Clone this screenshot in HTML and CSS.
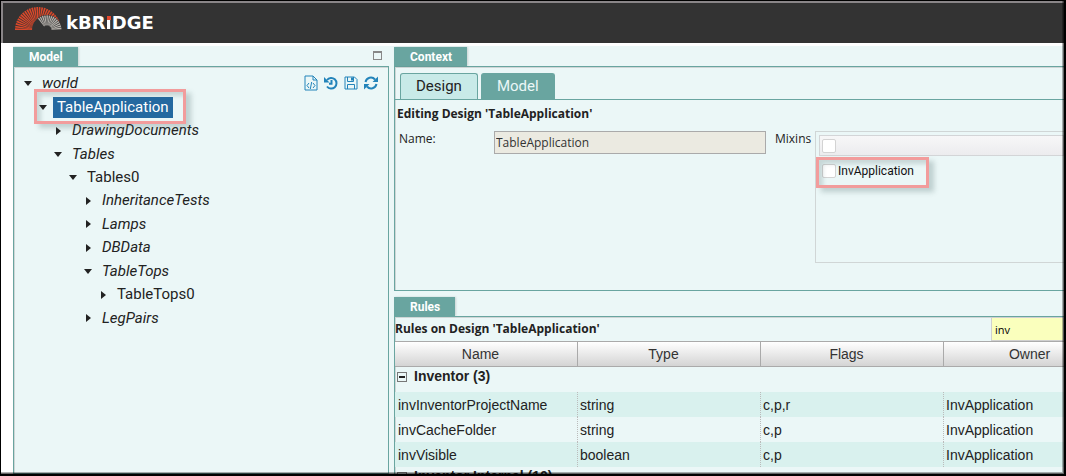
FILE: index.html
```html
<!DOCTYPE html>
<html lang="en">
<head>
<meta charset="utf-8">
<title>kBridge</title>
<link rel="stylesheet" href="styles.css">
</head>
<body>
<div class="frame">
  <header class="topbar">
    <svg class="logo-mark" viewBox="0 0 48 26" aria-hidden="true">
      <path d="M9 25A14 14 0 0 1 37 25" fill="none" stroke="#d9482b" stroke-width="18" stroke-dasharray="1.100 0.500"/>
      <circle cx="32" cy="25" r="15" fill="#333"/>
      <path d="M26 17.500A9.500 9.500 0 0 1 41.500 25" fill="none" stroke="#b5b1ac" stroke-width="10" stroke-dasharray="1 0.500"/>
    </svg>
    <span class="brand">kBR<span class="brand-accent">ı</span>DGE</span>
  </header>
  <main class="workspace">
    <section class="left">
      <div class="tab-row">
        <h2 class="pane-tab">Model</h2>
        <button class="maximize" aria-label="Maximize"></button>
      </div>
      <div class="pane tree-pane">
        <div class="toolbar">
          <button aria-label="Source"><svg viewBox="0 0 14 16"><path d="M1 1h8l4 4v10H1zM9 1v4h4M5 8l-2 2.500 2 2.500M9 8l2 2.500L9 13M7.700 7l-1.400 7" class="thin"/></svg></button>
          <button aria-label="History"><svg viewBox="0 0 14 16"><path d="M3 5a5.300 5.300 0 1 1 0 6.500M7.500 5v3.800H5" class="thick"/><path d="M0 2v5.500h5.500z" class="solid"/></svg></button>
          <button aria-label="Save"><svg viewBox="0 0 14 16"><path d="M1 2h9.500L13 4.500V14H1zM3.500 14V9.500h7V14M3.500 2v4.500h6V2" class="thin"/><path d="M7 2.500h2v3H7z" class="solid"/></svg></button>
          <button aria-label="Refresh"><svg viewBox="0 0 14 16"><path d="M1.500 7A5.500 5.500 0 0 1 11 4.500M12.500 9A5.500 5.500 0 0 1 3 11.500" class="thick"/><path d="M14 1.500V7H8.500zM0 14.500V9h5.500z" class="solid"/></svg></button>
        </div>
        <ul class="tree">
          <li class="l0 open"><i class="caret"></i><span class="node group">world</span></li>
          <li class="l1 open"><i class="caret"></i><span class="node selected">TableApplication</span><span class="callout callout-tree"></span></li>
          <li class="l2"><i class="caret"></i><span class="node group">DrawingDocuments</span></li>
          <li class="l2 open"><i class="caret"></i><span class="node group">Tables</span></li>
          <li class="l3 open"><i class="caret"></i><span class="node">Tables0</span></li>
          <li class="l4"><i class="caret"></i><span class="node group">InheritanceTests</span></li>
          <li class="l4"><i class="caret"></i><span class="node group">Lamps</span></li>
          <li class="l4"><i class="caret"></i><span class="node group">DBData</span></li>
          <li class="l4 open"><i class="caret"></i><span class="node group">TableTops</span></li>
          <li class="l5"><i class="caret"></i><span class="node">TableTops0</span></li>
          <li class="l4"><i class="caret"></i><span class="node group">LegPairs</span></li>
        </ul>
      </div>
    </section>
    <div class="right">
      <section class="context">
        <div class="tab-row"><h2 class="pane-tab">Context</h2></div>
        <div class="pane context-pane">
          <div class="subtabs">
            <button class="subtab">Design</button>
            <button class="subtab active">Model</button>
          </div>
          <h3 class="title">Editing Design 'TableApplication'</h3>
          <div class="form">
            <label class="name-label" for="name">Name:</label>
            <input class="name-input" id="name" type="text" value="TableApplication" readonly>
            <span class="mixins-label" id="mixins">Mixins</span>
            <div class="mixins" role="group" aria-labelledby="mixins">
              <div class="mixins-head"><input type="checkbox" class="check" aria-label="Select all"></div>
              <div class="mixins-item"><input type="checkbox" class="check" id="inv"><label for="inv">InvApplication</label><span class="callout callout-mixin"></span></div>
            </div>
          </div>
        </div>
      </section>
      <section class="rules">
        <div class="tab-row"><h2 class="pane-tab">Rules</h2></div>
        <div class="pane rules-pane">
          <div class="rules-head">
            <h3 class="title">Rules on Design 'TableApplication'</h3>
            <input class="filter" type="text" value="inv" aria-label="Filter rules">
          </div>
          <table class="grid">
            <thead><tr><th>Name</th><th>Type</th><th>Flags</th><th>Owner</th></tr></thead>
            <tbody>
              <tr class="group-row"><td colspan="4"><button class="collapse" aria-label="Collapse"></button>Inventor (3)</td></tr>
              <tr class="alt"><td>invInventorProjectName</td><td>string</td><td>c,p,r</td><td>InvApplication</td></tr>
              <tr><td>invCacheFolder</td><td>string</td><td>c,p</td><td>InvApplication</td></tr>
              <tr class="alt"><td>invVisible</td><td>boolean</td><td>c,p</td><td>InvApplication</td></tr>
              <tr class="group-row"><td colspan="4"><button class="collapse" aria-label="Collapse"></button>Inventor Internal (10)</td></tr>
            </tbody>
          </table>
        </div>
      </section>
    </div>
  </main>
</div>
</body>
</html>
```
FILE: styles.css
```css
* { box-sizing: border-box; }
body { margin: 0; background: #fff; color: #222; font-family: "Open Sans", sans-serif; font-size: 12px; }
h2, h3 { margin: 0; }
button { padding: 0; border: 0; background: none; font: inherit; color: inherit; }

.frame { position: relative; height: 100vh; overflow: hidden; display: flex; flex-direction: column; border: 1px solid #000; border-right-width: 2px; border-bottom-width: 2px; }
.frame::after { content: ""; position: absolute; inset: 0; pointer-events: none; border-right: 1px solid rgba(0, 0, 0, .6); border-bottom: 1px solid rgba(0, 0, 0, .6); box-shadow: inset -1px -1px 0 rgba(0, 0, 0, .3); }
.topbar { flex: none; height: 42px; display: flex; align-items: flex-start; gap: 3px; padding: 2px 12px; background: #333; border-top: 2px solid #8a8688; border-left: 2px solid #8a8688; }
.logo-mark { width: 48px; height: 26px; }
.brand { margin-top: 6px; font: bold 18px/24px "DejaVu Sans", sans-serif; color: #fff; }
.brand-accent { background: linear-gradient(#e2492f 8px, #fff 8px); -webkit-background-clip: text; background-clip: text; color: transparent; }
.brand-accent { position: relative; }
.brand-accent::before { content: ""; position: absolute; left: 1px; top: 4px; width: 4px; height: 4px; background: #e2492f; }

.workspace { flex: 1; min-height: 0; margin: 3px 0 0 12px; display: flex; gap: 5px; background: #ebf7f7; }
.left { flex: none; width: 376px; display: flex; flex-direction: column; }
.right { flex: 1; min-width: 0; display: flex; flex-direction: column; gap: 5px; }
.tab-row { display: flex; justify-content: space-between; align-items: flex-start; padding-top: 1px; }
.pane-tab { height: 19px; padding: 0 15px 0 16px; background: #69a5a0; color: #fff; font: bold 12px/20px Roboto, sans-serif; box-shadow: 1px 0 2px rgba(0, 0, 0, .15); }
.pane { border: 1px solid #69a5a0; box-shadow: inset 1px 1px 0 #cfd6d6; }
.maximize { width: 9px; height: 9px; margin: 4px 7px 0 0; border: 1px solid #888; border-top-width: 2px; }

.tree-pane { position: relative; flex: 1; padding-top: 5px; }
.toolbar { position: absolute; top: 8px; right: 10px; display: flex; gap: 6px; }
.toolbar button { width: 14px; height: 16px; }
.toolbar svg { display: block; width: 14px; height: 16px; fill: none; stroke: #2384ba; }
.toolbar .thin { stroke-width: 1; }
.toolbar .thick { stroke-width: 2; }
.toolbar .solid { fill: #2384ba; stroke: none; }
.tree { display: grid; grid-auto-rows: 1fr; height: 258px; margin: 0; padding: 0; list-style: none; font: 15px/21px Roboto, sans-serif; }
.tree li { position: relative; display: flex; align-items: center; }
.l0 { margin-left: 10px; }
.l1 { margin-left: 25px; }
.l2 { margin-left: 40px; }
.l3 { margin-left: 55px; }
.l4 { margin-left: 70px; }
.l5 { margin-left: 85px; }
.caret { width: 14px; display: flex; flex: none; }
.caret::before { content: ""; margin-left: 2px; border: 4px solid transparent; border-left: 5px solid #222; border-right: 0; }
.open > .caret::before { margin-left: 0; border: 4px solid transparent; border-top: 5px solid #222; border-bottom: 0; }
.node { padding: 0 4px; }
.group { font-style: italic; }
.selected { background: #2469a0; color: #fff; }

.callout { position: absolute; z-index: 1; pointer-events: none; border: 3px solid #f29c9c; box-shadow: 5px 4px 5px rgba(60, 90, 90, .25), inset 4px 4px 4px rgba(60, 90, 90, .2); }
.callout-tree { left: -5px; top: -6px; width: 152px; height: 35px; }
.callout-mixin { left: -3px; top: -7px; width: 113px; height: 31px; }

.context-pane { height: 225px; border-right: 0; }
.subtabs { display: flex; align-items: flex-end; gap: 3px; height: 33px; padding: 6px 5px 0; border-bottom: 1px solid #69a5a0; }
.subtab { height: 26px; padding: 0 15px; border: 1px solid #69a5a0; border-bottom: 0; border-radius: 3px 3px 0 0; background: #c8eae8; font: 15px/25px Roboto, sans-serif; }
.subtab.active { background: #69a5a0; color: #ebf7f7; }
.title { padding-left: 2px; font: bold 12px/24px "Open Sans", sans-serif; }
.context-pane .title { padding-top: 2px; }
.form { display: flex; align-items: flex-start; padding: 5px 0 0 4px; line-height: 16px; }
.name-label { flex: none; width: 95px; }
.name-input { flex: none; width: 272px; height: 23px; padding: 0 1px; border: 1px solid #aaa; background: #ebeae1; color: #333; font: 12px "Open Sans", sans-serif; }
.mixins-label { flex: none; width: 49px; padding-left: 9px; }
.mixins { flex: 1; height: 132px; padding: 3px 0 0 3px; border: 1px solid #d0d6d6; border-right: 0; }
.mixins-head { display: flex; height: 21px; padding: 3px 2px; border: 1px solid #d3d5d7; background: linear-gradient(#f7f7f8, #ececee); }
.mixins-item { position: relative; display: flex; align-items: center; gap: 2px; margin-top: 8px; height: 14px; padding-left: 3px; color: #111; font: 12px/14px Roboto, sans-serif; }
.check { appearance: none; flex: none; width: 14px; height: 14px; margin: 0; border: 1px solid #d3d3d3; border-radius: 2px; background: #fff; }

.rules { flex: 1; min-height: 0; display: flex; flex-direction: column; }
.rules-pane { flex: 1; min-height: 0; overflow: hidden; border-right: 0; border-bottom: 0; }
.rules-head { display: flex; justify-content: space-between; height: 24px; }
.rules-head .title { padding-left: 0; }
.filter { width: 73px; height: 24px; padding: 0 3px; border: 1px solid #d0d0d0; background: #faffbd; font: 11px "Open Sans", sans-serif; }
.grid { width: 732px; table-layout: fixed; border-collapse: separate; border-spacing: 0; font: 14px/24px "Liberation Sans", Arial, sans-serif; }
.grid th { height: 26px; padding: 0 11px 0 0; border: 1px solid #aaa; border-left: 0; background: linear-gradient(#fff, #d4d4d4); font-weight: normal; color: #333; }
.grid td { height: 25px; padding: 0 2px; border-right: 1px dotted #bbb; white-space: nowrap; }
.grid td:first-child { padding-left: 3px; }
.alt { background: #d9f1ee; }
.grid .group-row td { padding: 0 2px; border: 0; font-weight: bold; line-height: 18px; vertical-align: top; }
.collapse { position: relative; width: 10px; height: 10px; margin-right: 7px; border: 1px solid #777; vertical-align: 0; }
.collapse::after { content: ""; position: absolute; left: 1px; right: 1px; top: 3px; height: 2px; background: #222; }
```
